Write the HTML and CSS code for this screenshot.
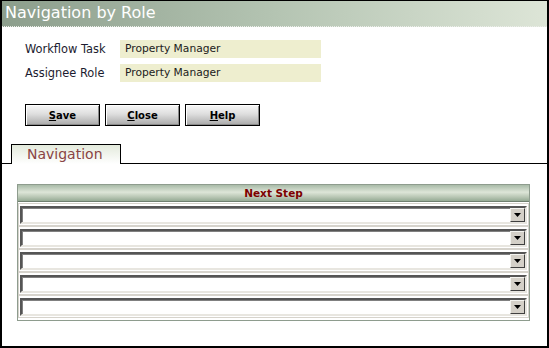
FILE: index.html
```html
<!DOCTYPE html>
<html>
<head>
    <title>Navigation by Role</title>
    <link rel="stylesheet" href="styles.css">
</head>
<body>
    <div class="window">
        <div class="titlebar">Navigation by Role</div>

        <div class="props">
            <label class="prop-label">Workflow Task</label>
            <div class="prop-value">Property Manager</div>
            <label class="prop-label">Assignee Role</label>
            <div class="prop-value">Property Manager</div>
        </div>

        <div class="actions">
            <button class="btn" type="button"><u>S</u>ave</button>
            <button class="btn" type="button"><u>C</u>lose</button>
            <button class="btn" type="button"><u>H</u>elp</button>
        </div>

        <div class="tabstrip">
            <div class="tab">Navigation</div>
        </div>

        <div class="steps">
            <div class="steps-header">Next Step</div>
            <div class="step-row"><div class="combo"><div class="combo-field"></div><div class="combo-btn"><svg width="7" height="4" viewBox="0 0 7 4"><path d="M0 0H7L3.5 4Z" fill="#000"/></svg></div></div></div>
            <div class="step-row"><div class="combo"><div class="combo-field"></div><div class="combo-btn"><svg width="7" height="4" viewBox="0 0 7 4"><path d="M0 0H7L3.5 4Z" fill="#000"/></svg></div></div></div>
            <div class="step-row"><div class="combo"><div class="combo-field"></div><div class="combo-btn"><svg width="7" height="4" viewBox="0 0 7 4"><path d="M0 0H7L3.5 4Z" fill="#000"/></svg></div></div></div>
            <div class="step-row"><div class="combo"><div class="combo-field"></div><div class="combo-btn"><svg width="7" height="4" viewBox="0 0 7 4"><path d="M0 0H7L3.5 4Z" fill="#000"/></svg></div></div></div>
            <div class="step-row"><div class="combo"><div class="combo-field"></div><div class="combo-btn"><svg width="7" height="4" viewBox="0 0 7 4"><path d="M0 0H7L3.5 4Z" fill="#000"/></svg></div></div></div>
        </div>
    </div>
</body>
</html>
```

FILE: styles.css
```css
html, body {
    margin: 0;
    padding: 0;
    background: #fff;
}
body {
    font-family: "DejaVu Sans", Verdana, sans-serif;
}
.window {
    box-sizing: border-box;
    width: 549px;
    height: 348px;
    border: 2px solid #000;
    border-top-width: 1px;
    background: #fff;
}
.titlebar {
    height: 25px;
    line-height: 24px;
    padding-left: 3px;
    font-size: 16px;
    color: #fff;
    background: linear-gradient(to right, #8c9e8c, #b4c4b2 50%, #dde5d7);
    border-bottom: 1px dotted #eceeea;
}
.props {
    display: grid;
    grid-template-columns: 95px 201px;
    row-gap: 6px;
    margin: 13px 0 0 23px;
}
.prop-label {
    font-size: 11.4px;
    line-height: 18px;
    color: #1c1c30;
}
.prop-value {
    height: 18px;
    line-height: 18px;
    padding-left: 5px;
    font-size: 10.7px;
    color: #202020;
    background: #eeeecf;
}
.actions {
    display: flex;
    gap: 5px;
    margin: 22px 0 0 23px;
}
.btn {
    box-sizing: border-box;
    width: 75px;
    height: 22px;
    padding: 0;
    border: 1px solid #000;
    font-family: "DejaVu Sans", Verdana, sans-serif;
    font-size: 10px;
    font-weight: bold;
    color: #000;
    background: linear-gradient(#f7f7f7, #dedede 45%, #a9a9a9);
    box-shadow: inset 1px 1px #fff, inset -1px -1px #8a8a8a;
}
.tabstrip {
    display: flex;
    margin-top: 18px;
    padding-left: 9px;
    border-bottom: 1px solid #000;
}
.tab {
    box-sizing: border-box;
    width: 110px;
    height: 20px;
    margin-bottom: -1px;
    padding-left: 15px;
    border: 1px solid #000;
    border-bottom: none;
    font-size: 14px;
    line-height: 18px;
    color: #8a4444;
    background: linear-gradient(#e3eadc, #fff);
}
.steps {
    width: 513px;
    box-sizing: border-box;
    margin: 20px 0 0 15px;
    padding-bottom: 2px;
    border: 1px solid #8e9c8e;
}
.steps-header {
    height: 16px;
    margin-bottom: 1px;
    line-height: 16px;
    text-align: center;
    font-size: 10.5px;
    font-weight: bold;
    color: #7d0000;
    background: linear-gradient(#a9bba8, #dde5d8 45%, #b8c6b4 75%, #95aa94);
    border-bottom: 1px solid #6f7f6f;
}
.step-row {
    padding: 2px 1px 1px;
    border: 1px solid #d6d3cc;
}
.combo {
    display: flex;
    box-sizing: border-box;
    height: 18px;
    border-style: solid;
    border-width: 2px;
    border-color: #555 #e8e6e0 #e8e6e0 #555;
    box-shadow: inset 1px 1px #808080;
    background: #fff;
}
.combo-field {
    flex: 1;
}
.combo-btn {
    box-sizing: border-box;
    width: 15px;
    height: 14px;
    display: flex;
    align-items: center;
    justify-content: center;
    background: #d4d0c8;
    border-style: solid;
    border-width: 1px;
    border-color: #f4f4f0 #404040 #404040 #f4f4f0;
}
```
